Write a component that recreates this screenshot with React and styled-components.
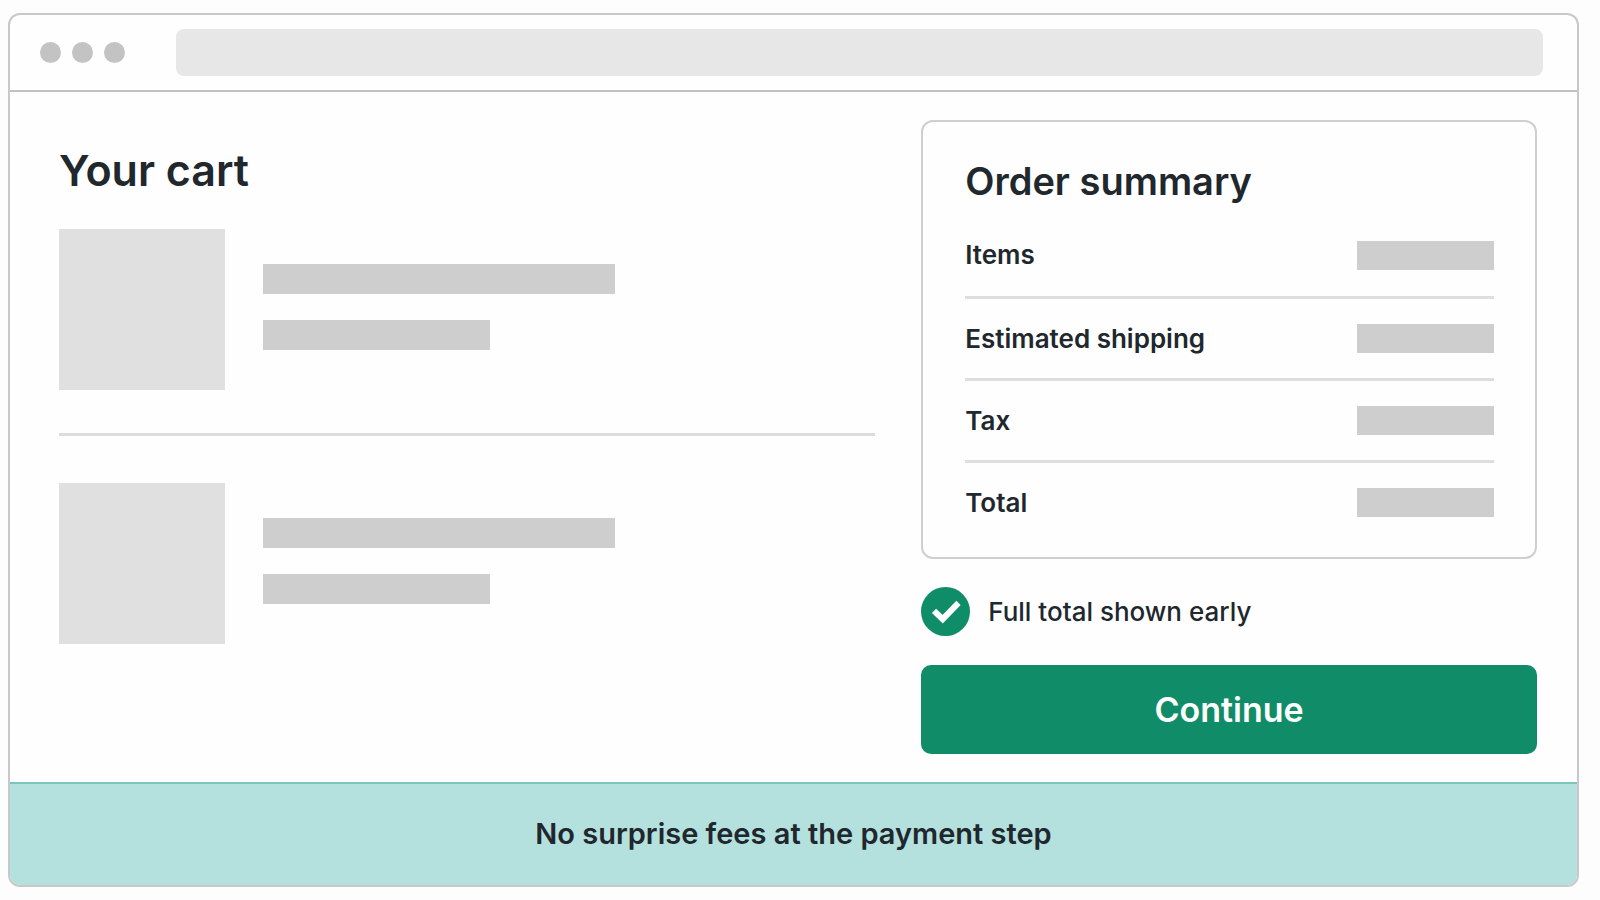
import React from 'react';
import styled, { createGlobalStyle } from "styled-components";

const products = [1, 2];
const summaryRows = ['Items', 'Estimated shipping', 'Tax', 'Total'];

function App() {

    return (
        <>
            <GlobalStyle />
            <BrowserWindow>
                <TitleBar>
                    <Dots>
                        <Dot />
                        <Dot />
                        <Dot />
                    </Dots>
                    <AddressBar />
                </TitleBar>

                <Content>
                    <Cart>
                        <CartTitle>Your cart</CartTitle>
                        <ProductList>
                            {products.map((id) => (
                                <Product key={id}>
                                    <Thumbnail />
                                    <Lines>
                                        <Line $width="352px" />
                                        <Line $width="227px" />
                                    </Lines>
                                </Product>
                            ))}
                        </ProductList>
                    </Cart>

                    <Checkout>
                        <Summary>
                            <SummaryTitle>Order summary</SummaryTitle>
                            <dl>
                                {summaryRows.map((label) => (
                                    <SummaryRow key={label}>
                                        <dt>{label}</dt>
                                        <Amount />
                                    </SummaryRow>
                                ))}
                            </dl>
                        </Summary>
                        <Note>
                            <CheckBadge viewBox="0 0 49 49" aria-hidden="true">
                                <circle cx="24.5" cy="24.5" r="24.5" />
                                <path d="M13 23.8 L21.7 32.2 L37.5 15.8" />
                            </CheckBadge>
                            Full total shown early
                        </Note>
                        <ContinueButton type="button">Continue</ContinueButton>
                    </Checkout>
                </Content>

                <Banner>No surprise fees at the payment step</Banner>
            </BrowserWindow>
        </>
    )
}

export default App

const GlobalStyle = createGlobalStyle`
    * {
        box-sizing: border-box;
    }

    body {
        margin: 0;
        background: #fdfdfd;
        color: #20272d;
        font-family: Inter, "Liberation Sans", sans-serif;
    }

    h1, h2, p, ul, dl, dd {
        margin: 0;
        padding: 0;
    }
`
const BrowserWindow = styled.div`
    display: flex;
    flex-direction: column;
    min-height: calc(100vh - 26px);
    margin: 13px 21px 13px 8px;
    border: 2px solid #c8c8c8;
    border-radius: 12px;
    background: #fefefe;
    overflow: hidden;
`
const TitleBar = styled.div`
    display: flex;
    align-items: center;
    gap: 51px;
    padding: 14px 34px 14px 30px;
    border-bottom: 2px solid #c2c2c2;
`
const Dots = styled.div`
    display: flex;
    gap: 11px;
`
const Dot = styled.span`
    width: 21px;
    height: 21px;
    border-radius: 50%;
    background: #c3c3c3;
`
const AddressBar = styled.div`
    flex: 1;
    height: 47px;
    border-radius: 8px;
    background: #e7e7e7;
`
const Content = styled.main`
    flex: 1;
    display: grid;
    grid-template-columns: 57fr 43fr;
    align-items: start;
    gap: 46px;
    padding: 28px 40px 28px 49px;
`
const Cart = styled.section`
    padding-top: 22px;
`
const CartTitle = styled.h1`
    font-size: 43px;
    line-height: 56px;
    font-weight: 600;
`
const ProductList = styled.ul`
    margin-top: 31px;
    list-style: none;
`
const Product = styled.li`
    display: flex;
    align-items: center;
    gap: 38px;

    & + & {
        margin-top: 43px;
        padding-top: 47px;
        border-top: 3px solid #dcdcdc;
    }
`
const Thumbnail = styled.div`
    width: 166px;
    height: 161px;
    background: #e0e0e0;
`
const Lines = styled.div`
    display: flex;
    flex-direction: column;
    gap: 26px;
    padding-bottom: 6px;
`
const Line = styled.div`
    width: ${props => props.$width};
    height: 30px;
    background: #cecece;
`
const Checkout = styled.section`
    display: flex;
    flex-direction: column;
`
const Summary = styled.div`
    padding: 35px 41px 15px 42px;
    border: 2px solid #cfcfcf;
    border-radius: 12px;
`
const SummaryTitle = styled.h2`
    margin-bottom: 9px;
    font-size: 38px;
    line-height: 48px;
    font-weight: 600;
`
const SummaryRow = styled.div`
    display: flex;
    align-items: center;
    justify-content: space-between;
    height: 82px;
    font-size: 26px;
    line-height: 32px;
    font-weight: 600;

    & + & {
        border-top: 3px solid #dedede;
    }
`
const Amount = styled.dd`
    width: 137px;
    height: 29px;
    background: #cecece;
`
const Note = styled.p`
    display: flex;
    align-items: center;
    gap: 18px;
    margin: 28px 0 29px;
    font-size: 26px;
    line-height: 32px;
    font-weight: 500;
`
const CheckBadge = styled.svg`
    width: 49px;
    height: 49px;

    circle {
        fill: #0f8d68;
    }

    path {
        fill: none;
        stroke: #ffffff;
        stroke-width: 6;
    }
`
const ContinueButton = styled.button`
    height: 89px;
    border: none;
    border-radius: 10px;
    background: #118c68;
    color: #ffffff;
    font-family: inherit;
    font-size: 34px;
    font-weight: 600;
    cursor: pointer;
`
const Banner = styled.footer`
    padding: 31px 20px 32px;
    border-top: 2px solid #7cc5bc;
    background: #b4e0de;
    font-size: 29px;
    line-height: 38px;
    font-weight: 600;
    text-align: center;
`
